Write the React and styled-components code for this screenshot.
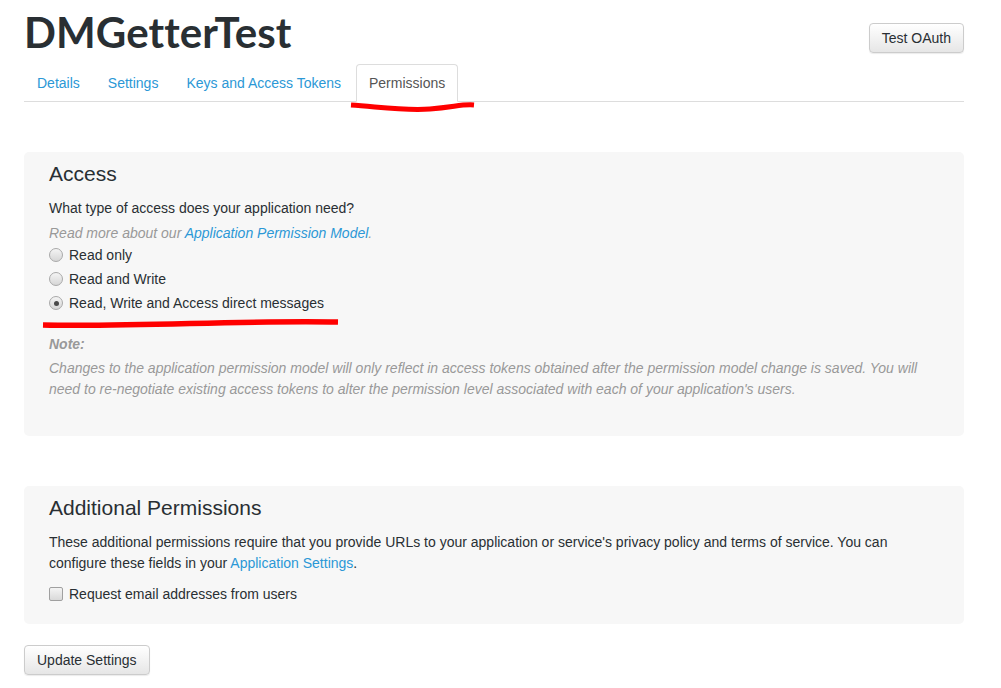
import React from 'react'
import styled, { createGlobalStyle } from 'styled-components'

const GlobalStyle = createGlobalStyle`
  html, body {
    margin: 0;
    padding: 0;
    background: #fff;
  }
  body {
    font-family: 'Liberation Sans', Arial, sans-serif;
    font-size: 14px;
    color: #292f33;
  }
`

const Page = styled.div`
  position: relative;
  width: 1001px;
  min-height: 688px;
`

const Container = styled.div`
  width: 940px;
  margin-left: 24px;
`

const Header = styled.div`
  display: flex;
  justify-content: space-between;
  align-items: flex-start;
  height: 55px;
`

const Title = styled.h1`
  margin: 9px 0 0;
  font-family: Lato, 'Open Sans', sans-serif;
  font-weight: 700;
  font-size: 42px;
  line-height: 46px;
  color: #292f33;
  letter-spacing: 0.1px;
`

const Button = styled.button`
  height: 30px;
  padding: 0 12px;
  margin-top: ${(p) => p.offset || 0}px;
  font-family: 'Liberation Sans', Arial, sans-serif;
  font-size: 14px;
  color: #292f33;
  background: linear-gradient(#fff, #e6e6e6);
  border: 1px solid #ccc;
  border-radius: 4px;
  box-shadow: 0 1px 1px rgba(0, 0, 0, 0.08);
`

const Tabs = styled.ul`
  display: flex;
  list-style: none;
  margin: 9px 0 0;
  padding: 0;
  border-bottom: 1px solid #ddd;
  height: 37px;
`

const Tab = styled.li`
  display: flex;
  align-items: center;
  height: 38px;
  padding: 0 12px;
  margin-right: ${(p) => (p.active ? 0 : 2)}px;
  box-sizing: border-box;
  color: ${(p) => (p.active ? '#555' : '#2b98d6')};
  background: ${(p) => (p.active ? '#fff' : 'transparent')};
  border: 1px solid ${(p) => (p.active ? '#ddd' : 'transparent')};
  border-bottom-color: ${(p) => (p.active ? '#fff' : 'transparent')};
  border-radius: 4px 4px 0 0;
`

const Panel = styled.section`
  background: #f7f7f7;
  border-radius: 5px;
  padding: 10px 25px ${(p) => p.bottom}px;
  margin-top: ${(p) => p.top}px;
`

const PanelTitle = styled.h2`
  margin: 0;
  font-family: 'Liberation Sans', Arial, sans-serif;
  font-weight: 400;
  font-size: 21px;
  line-height: 24px;
  color: #292f33;
`

const Text = styled.p`
  margin: ${(p) => p.mt || 0}px 0 0;
  line-height: ${(p) => p.lh || 20}px;
  color: ${(p) => (p.muted ? '#999' : '#292f33')};
  font-style: ${(p) => (p.muted ? 'italic' : 'normal')};
  font-weight: ${(p) => (p.bold ? 700 : 400)};
`

const Link = styled.a`
  color: #2b98d6;
  text-decoration: none;
`

const OptionList = styled.div`
  display: flex;
  flex-direction: column;
  margin-top: ${(p) => p.mt || 0}px;
`

const Option = styled.label`
  display: flex;
  align-items: center;
  gap: 6px;
  height: 24px;
  color: #292f33;
`

const Radio = styled.span`
  position: relative;
  width: 12px;
  height: 12px;
  border-radius: 50%;
  border: 1px solid #a9a9a9;
  background: linear-gradient(#f4f4f4, #d6d6d6);

  &::after {
    content: '';
    display: ${(p) => (p.checked ? 'block' : 'none')};
    position: absolute;
    left: 3.5px;
    top: 3.5px;
    width: 5px;
    height: 5px;
    border-radius: 50%;
    background: #4a4a4a;
  }
`

const Checkbox = styled.span`
  width: 12px;
  height: 12px;
  border-radius: 2px;
  border: 1px solid #a0a0a0;
  background: linear-gradient(#f4f4f4, #d9d9d9);
`

const Footer = styled.div`
  margin-top: 21px;
`

const Marks = styled.svg`
  position: absolute;
  left: 0;
  top: 0;
  pointer-events: none;
`

export default function App() {
  return (
    <Page>
      <GlobalStyle />
      <Container>
        <Header>
          <Title>DMGetterTest</Title>
          <Button offset={23}>Test OAuth</Button>
        </Header>
        <Tabs>
          <Tab>Details</Tab>
          <Tab>Settings</Tab>
          <Tab>Keys and Access Tokens</Tab>
          <Tab active>Permissions</Tab>
        </Tabs>

        <Panel top={50} bottom={36}>
          <PanelTitle>Access</PanelTitle>
          <Text mt={12}>What type of access does your application need?</Text>
          <Text muted mt={5}>
            Read more about our <Link href="#">Application Permission Model</Link>.
          </Text>
          <OptionList>
            <Option>
              <Radio />
              Read only
            </Option>
            <Option>
              <Radio />
              Read and Write
            </Option>
            <Option>
              <Radio checked />
              Read, Write and Access direct messages
            </Option>
          </OptionList>
          <Text muted bold mt={19}>Note:</Text>
          <Text muted mt={4} lh={21}>
            Changes to the application permission model will only reflect in access tokens obtained
            after the permission model change is saved. You will need to re-negotiate existing access
            tokens to alter the permission level associated with each of your application's users.
          </Text>
        </Panel>

        <Panel top={50} bottom={18}>
          <PanelTitle>Additional Permissions</PanelTitle>
          <Text mt={12} lh={21}>
            These additional permissions require that you provide URLs to your application or
            service's privacy policy and terms of service. You can configure these fields in
            your <Link href="#">Application Settings</Link>.
          </Text>
          <OptionList mt={8}>
            <Option>
              <Checkbox />
              Request email addresses from users
            </Option>
          </OptionList>
        </Panel>

        <Footer>
          <Button>Update Settings</Button>
        </Footer>
      </Container>

      <Marks width="1001" height="688" viewBox="0 0 1001 688">
        <path
          d="M351 105 C 380 107, 405 111, 430 109 S 462 104, 474 105"
          fill="none"
          stroke="#f00"
          strokeWidth="5"
          strokeLinecap="butt"
        />
        <path
          d="M43 325 C 140 327, 240 320, 338 322"
          fill="none"
          stroke="#f00"
          strokeWidth="5.5"
          strokeLinecap="butt"
        />
      </Marks>
    </Page>
  )
}
